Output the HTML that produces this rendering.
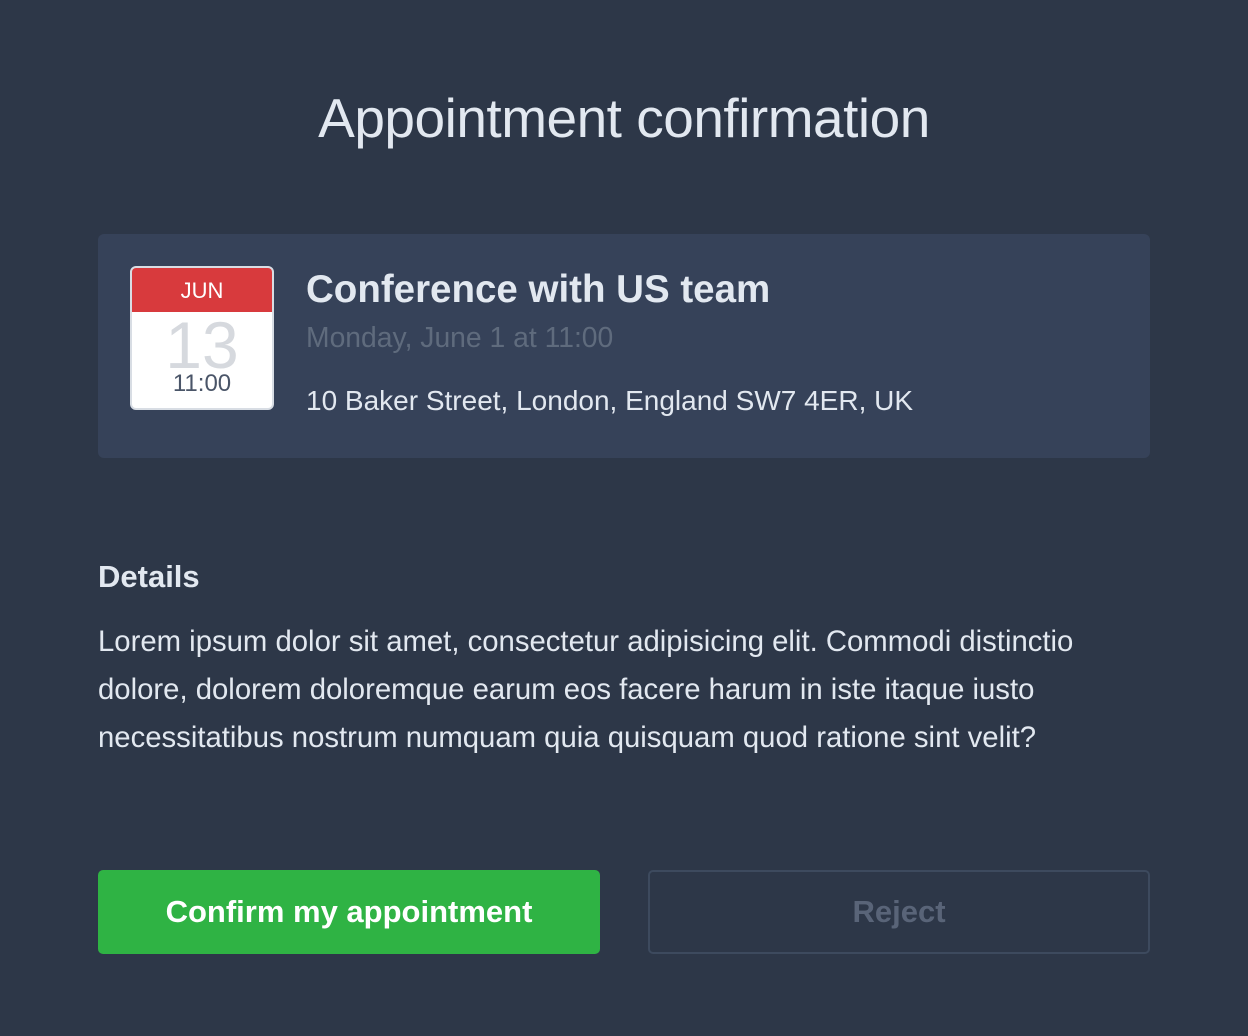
<!DOCTYPE html>
<html><head><meta charset="utf-8"><style>
*{box-sizing:border-box;margin:0;padding:0}
body{width:1248px;height:1036px;background:#2d3748;font-family:"Liberation Sans",sans-serif;color:#e2e8f0;position:relative;overflow:hidden}
h1{position:absolute;top:86px;left:0;width:1248px;text-align:center;font-weight:300;font-size:55px;color:#e2e8f0;letter-spacing:-0.5px}
.card{position:absolute;left:98px;top:234px;width:1052px;height:224px;background:#364259;border-radius:6px}
.cal{position:absolute;left:32px;top:32px;width:144px;height:144px;background:#fff;border:2px solid #d8dde4;border-radius:6px;overflow:hidden}
.cal .m{height:44px;background:#d83a3d;color:#fff;text-align:center;font-size:22px;line-height:46px}
.cal .d{text-align:center;font-size:66px;line-height:62px;color:#d6d9de;font-weight:300;margin-top:2px}
.cal .t{text-align:center;font-size:24px;color:#4a5568;line-height:20px;margin-top:-2px}
.title{position:absolute;left:208px;top:34px;font-size:38.5px;font-weight:bold;color:#e2e8f0}
.date{position:absolute;left:208px;top:87px;font-size:28.3px;color:#5f6b7d}
.addr{position:absolute;left:208px;top:151px;font-size:28px;color:#e2e8f0}
h2{position:absolute;left:98px;top:559px;font-size:31px;font-weight:bold;color:#e2e8f0}
p{position:absolute;left:98px;top:618px;width:1100px;font-size:29.3px;line-height:48px;color:#e2e8f0;white-space:nowrap}
.btn{position:absolute;top:870px;height:84px;width:502px;border-radius:5px;text-align:center;font-size:31px;font-weight:bold;line-height:84px}
.ok{left:98px;background:#2fb344;color:#fff}
.no{left:648px;border:2px solid #3d4a5e;color:#596478;line-height:80px}
</style></head><body>
<h1>Appointment confirmation</h1>
<div class="card">
<div class="cal"><div class="m">JUN</div><div class="d">13</div><div class="t">11:00</div></div>
<div class="title">Conference with US team</div>
<div class="date">Monday, June 1 at 11:00</div>
<div class="addr">10 Baker Street, London, England SW7 4ER, UK</div>
</div>
<h2>Details</h2>
<p>Lorem ipsum dolor sit amet, consectetur adipisicing elit. Commodi distinctio<br>dolore, dolorem doloremque earum eos facere harum in iste itaque iusto<br>necessitatibus nostrum numquam quia quisquam quod ratione sint velit?</p>
<div class="btn ok">Confirm my appointment</div>
<div class="btn no">Reject</div>
</body></html>
